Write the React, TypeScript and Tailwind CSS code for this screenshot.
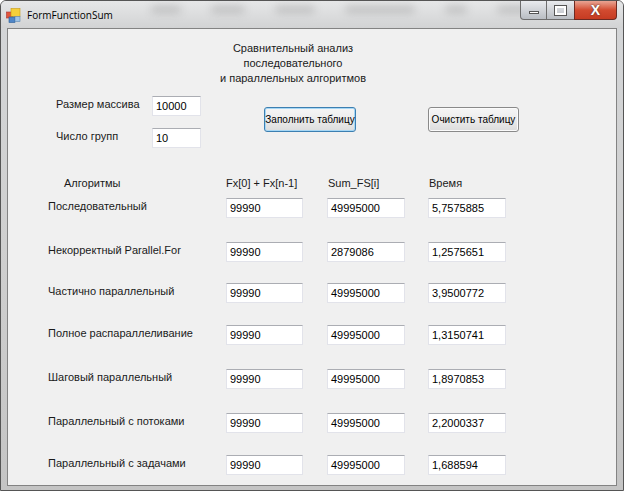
import React from 'react';

const rows = [
  { name: 'Последовательный', a: '99990', b: '49995000', c: '5,7575885', mt: 'mt-[7px]' },
  { name: 'Некорректный Parallel.For', a: '99990', b: '2879086', c: '1,2575651', mt: 'mt-[24px]' },
  { name: 'Частично параллельный', a: '99990', b: '49995000', c: '3,9500772', mt: 'mt-[21px]' },
  { name: 'Полное распараллеливание', a: '99990', b: '49995000', c: '1,3150741', mt: 'mt-[22px]' },
  { name: 'Шаговый параллельный', a: '99990', b: '49995000', c: '1,8970853', mt: 'mt-[24px]' },
  { name: 'Параллельный с потоками', a: '99990', b: '49995000', c: '2,2000337', mt: 'mt-[24px]' },
  { name: 'Параллельный с задачами', a: '99990', b: '49995000', c: '1,688594', mt: 'mt-[22px]' },
];

const Field = ({ value, w }: { value: string; w: string }) => (
  <div
    className={`${w} h-[20px] bg-white border border-[#e2e3ea] border-t-[#abadb3] flex items-center pl-[3px] text-black`}
  >
    {value}
  </div>
);

const WinButton = ({ label, focused }: { label: string; focused?: boolean }) => (
  <div
    className={`h-[25px] flex items-center justify-center whitespace-nowrap text-[10px] rounded-[3px] border bg-gradient-to-b from-[#f6f6f6] via-[#ececec] to-[#dcdcdc] text-black ${
      focused ? 'border-[#3c7fb1] shadow-[inset_0_0_0_1px_#a6d7f5]' : 'border-[#8a8a8a] shadow-[inset_0_0_0_1px_#fbfbfb]'
    }`}
  >
    {label}
  </div>
);

const AppIcon = () => (
  <svg width="15" height="15" viewBox="0 0 15 15">
    <rect x="0.5" y="4" width="6" height="6" fill="#e2553a" stroke="#a33" strokeWidth="0.6" />
    <rect x="5" y="0.5" width="9" height="8" fill="#f4cf3a" stroke="#c89a12" strokeWidth="0.6" />
    <rect x="3" y="9" width="6" height="5.5" fill="#4f86c8" stroke="#2a5b95" strokeWidth="0.6" />
    <rect x="9" y="8.5" width="5" height="5" fill="#9ec3e6" stroke="#5b86b3" strokeWidth="0.6" />
  </svg>
);

const App = () => {
  return (
    <div
      className="w-[624px] h-[491px] overflow-hidden bg-gradient-to-b from-[#d4d6d8] via-[#cfcfcf] to-[#c4c4c4] border border-[#555] rounded-t-[6px] flex flex-col text-[11px] text-[#1a1a1a]"
      style={{ fontFamily: '"Liberation Sans", Arial, sans-serif' }}
    >
      {/* title bar */}
      <div className="h-[27px] flex items-start relative bg-gradient-to-b from-[#e6e7e8] to-[#d2d3d4]">
        <div className="absolute left-[150px] top-[5px] flex gap-[30px] blur-[4px] opacity-40">
          <div className="w-[30px] h-[7px] bg-[#8a8a8a] rounded" />
          <div className="w-[34px] h-[7px] bg-[#8a8a8a] rounded" />
          <div className="w-[40px] h-[7px] bg-[#8a8a8a] rounded" />
          <div className="w-[70px] h-[7px] bg-[#8a8a8a] rounded" />
          <div className="w-[22px] h-[7px] bg-[#8a8a8a] rounded" />
          <div className="w-[50px] h-[7px] bg-[#8a8a8a] rounded" />
        </div>
        <div className="flex items-center gap-[6px] pl-[5px] pt-[7px] relative">
          <AppIcon />
          <span className="text-[10px] text-black" style={{ fontFamily: '"Open Sans", "Noto Sans", sans-serif' }}>
            FormFunctionSum
          </span>
        </div>
        <div className="ml-auto mr-[6px] flex relative">
          <div className="w-[27px] h-[19px] border border-[#6d6d6d] border-t-0 rounded-bl-[4px] bg-gradient-to-b from-[#e9ebee] to-[#b9bdc3] flex items-end justify-center pb-[5px]">
            <div className="w-[10px] h-[3px] bg-white border border-[#555]" />
          </div>
          <div className="w-[27px] h-[19px] border-b border-[#6d6d6d] bg-gradient-to-b from-[#e9ebee] to-[#b9bdc3] flex items-center justify-center">
            <div className="w-[11px] h-[9px] border-[2px] border-white outline outline-1 outline-[#555] bg-transparent" />
          </div>
          <div className="w-[43px] h-[19px] border border-[#6d2a22] border-t-0 rounded-br-[4px] bg-gradient-to-b from-[#e8a493] via-[#d24b30] to-[#c63b22] flex items-center justify-center">
            <span className="text-white font-bold text-[14px] leading-none [text-shadow:0_0_2px_#333]">X</span>
          </div>
        </div>
      </div>

      {/* client area */}
      <div className="mx-[6px] h-[458px] border border-[#838383] bg-[#f0f0f0] flex flex-col">
        <div className="pt-[12px] pl-[180px] w-[400px]">
          <div className="w-[210px] text-center leading-[15px]">
            <div>Сравнительный анализ</div>
            <div>последовательного</div>
            <div>и параллельных алгоритмов</div>
          </div>
        </div>

        <div className="flex mt-[10px]">
          <div className="pl-[48px] flex flex-col gap-[12px]">
            <div className="flex items-center">
              <span className="w-[96px] -mt-[4px]">Размер массива</span>
              <Field value="10000" w="w-[49px]" />
            </div>
            <div className="flex items-center">
              <span className="w-[96px] -mt-[4px]">Число групп</span>
              <Field value="10" w="w-[49px]" />
            </div>
          </div>
          <div className="flex mt-[11px] ml-[63px] gap-[72px]">
            <div className="w-[92px]">
              <WinButton label="Заполнить таблицу" focused />
            </div>
            <div className="w-[91px]">
              <WinButton label="Очистить таблицу" />
            </div>
          </div>
        </div>

        <div className="flex mt-[28px] leading-[15px]">
          <span className="pl-[56px] w-[218px]">Алгоритмы</span>
          <span className="w-[102px]">Fx[0] + Fx[n-1]</span>
          <span className="w-[101px]">Sum_FS[i]</span>
          <span>Время</span>
        </div>

        {rows.map((r) => (
          <div key={r.name} className={`flex items-center ${r.mt}`}>
            <span className="pl-[40px] w-[218px] -mt-[3px]">{r.name}</span>
            <Field value={r.a} w="w-[77px]" />
            <div className="w-[24px]" />
            <Field value={r.b} w="w-[78px]" />
            <div className="w-[23px]" />
            <Field value={r.c} w="w-[78px]" />
          </div>
        ))}
      </div>
    </div>
  );
};

export default App;
